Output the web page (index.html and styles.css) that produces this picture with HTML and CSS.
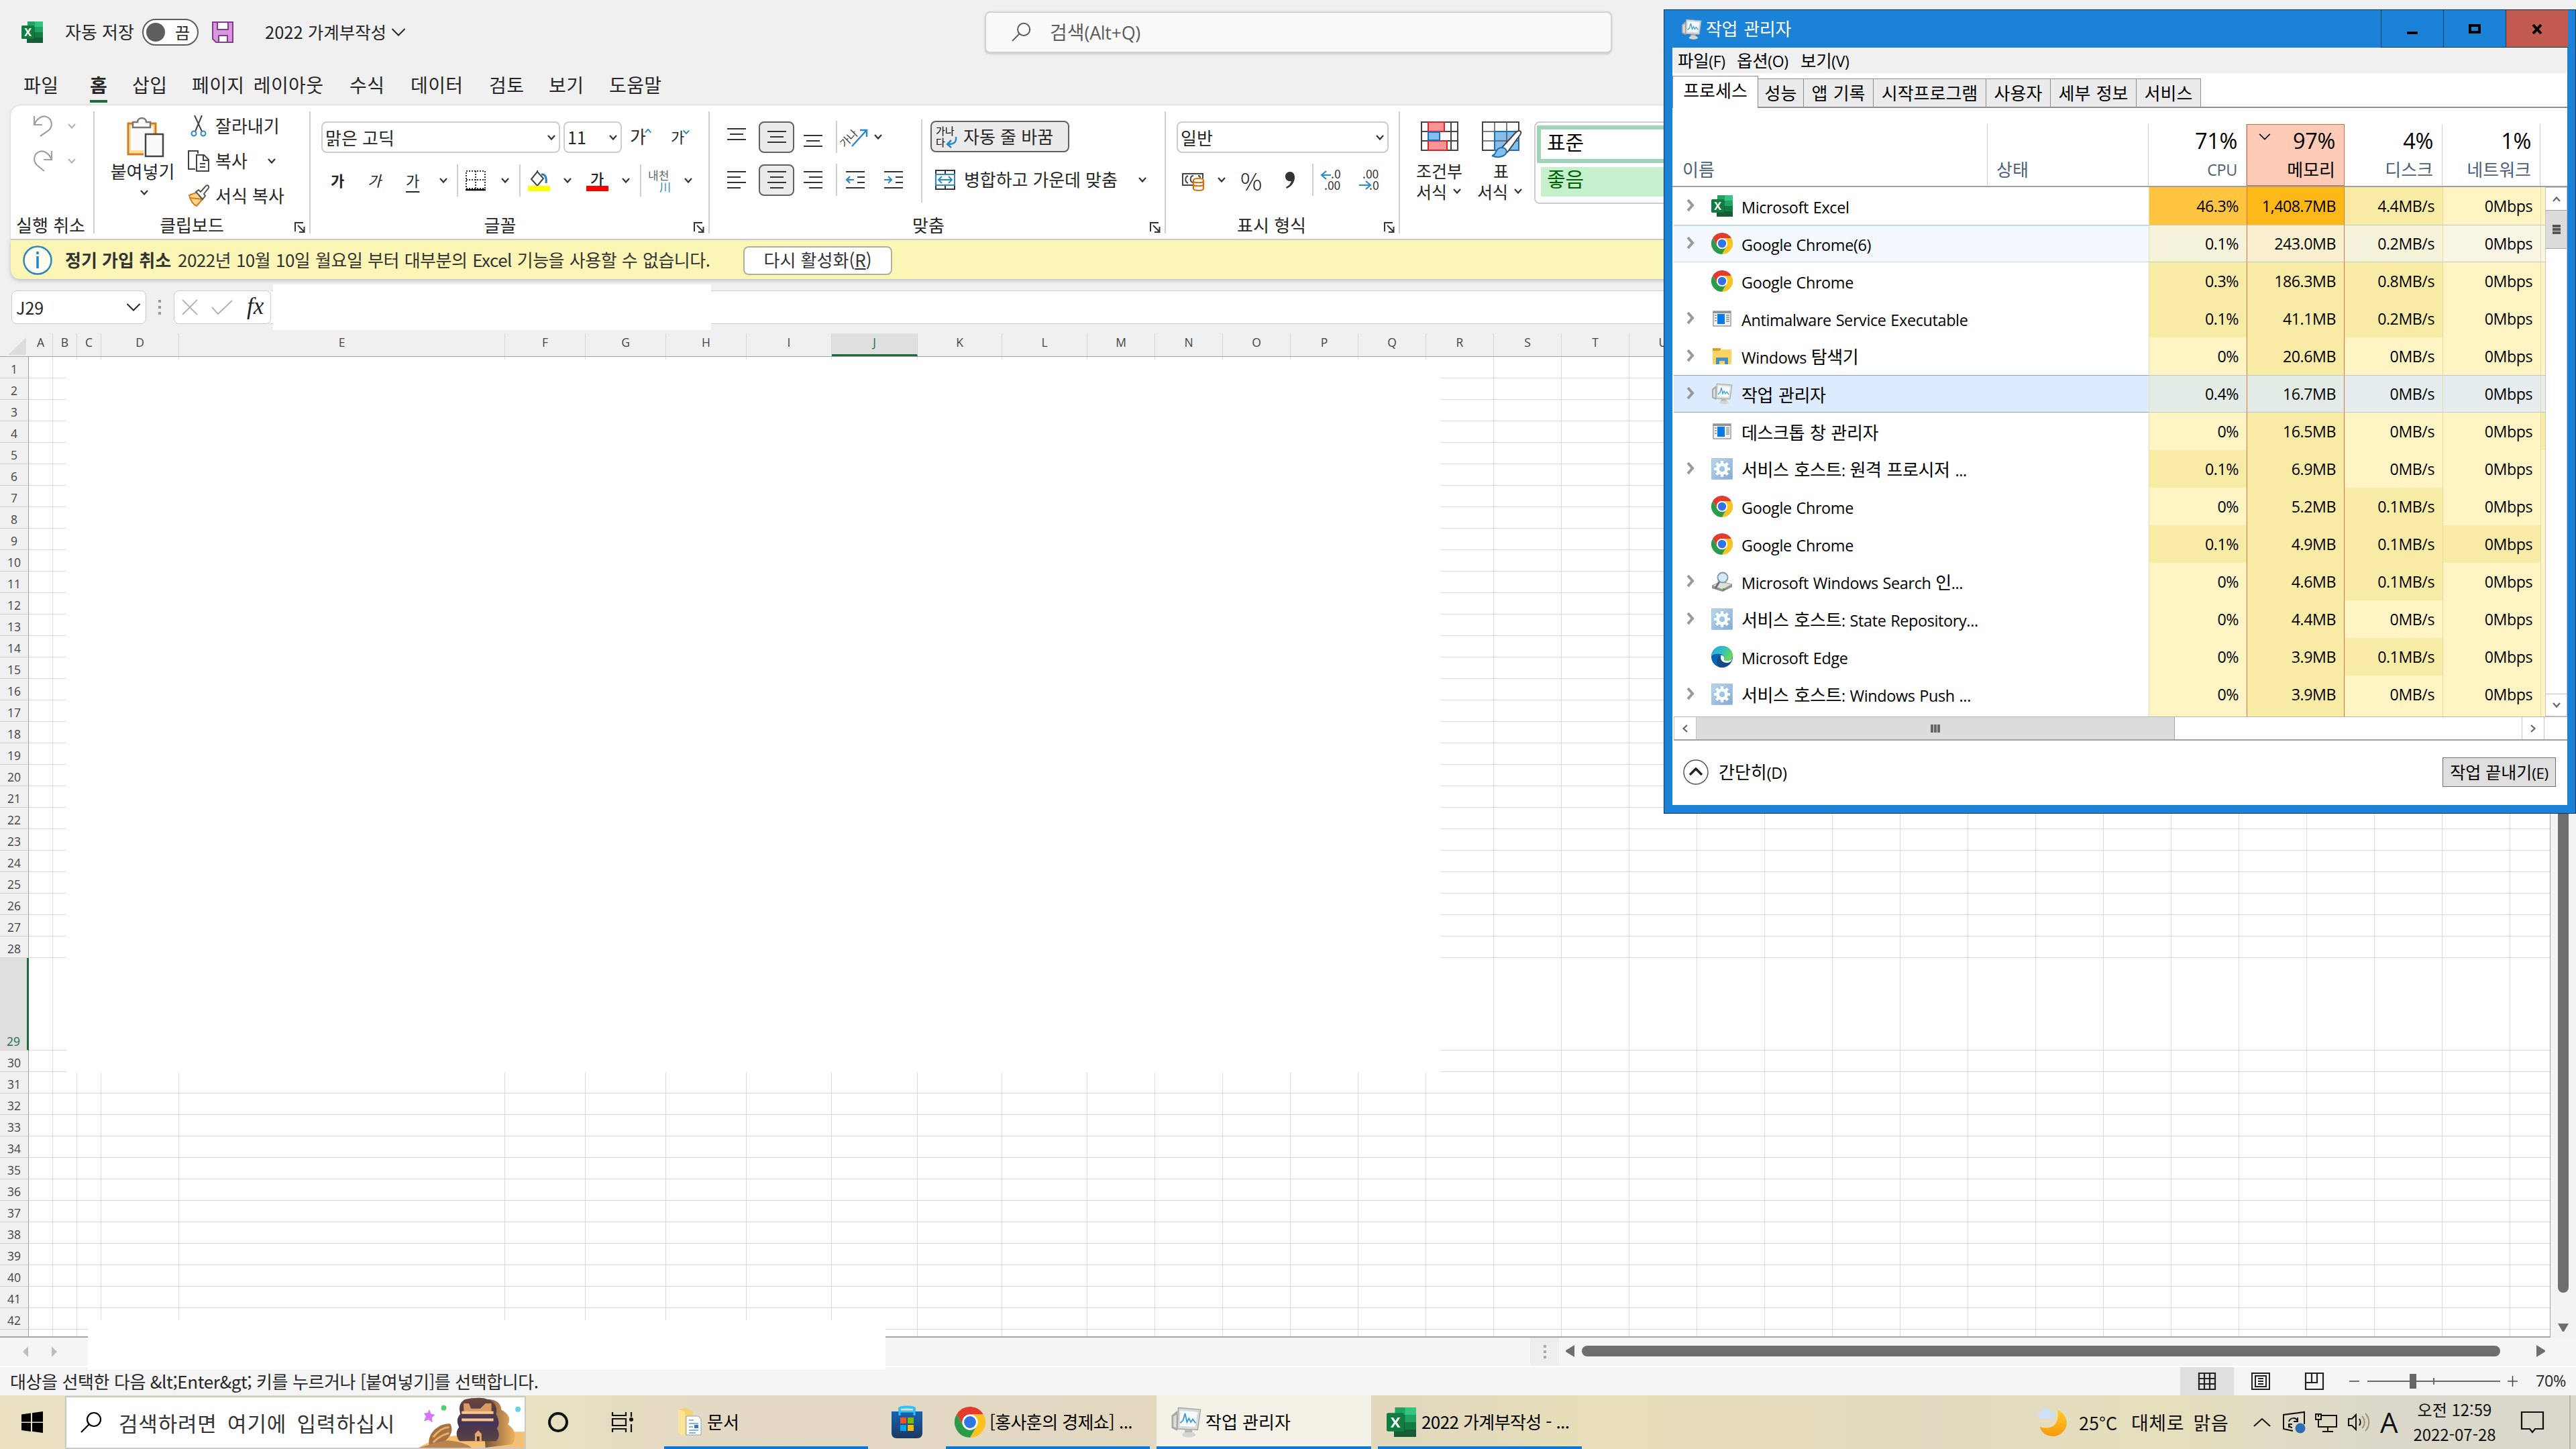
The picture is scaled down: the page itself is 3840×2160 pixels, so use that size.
FILE: index.html
```html
<!DOCTYPE html>
<html lang="ko">
<head>
    <meta charset="UTF-8">
    <title>2022 가계부작성</title>
    <link rel="stylesheet" href="styles.css">
</head>
<body>
    <svg class="defs" width="0" height="0">
        <defs>
            <linearGradient id="edgeA" x1="0" y1="0" x2="1" y2="0.6"><stop offset="0" stop-color="#2aa7e0"/><stop offset="0.5" stop-color="#2fc0c8"/><stop offset="1" stop-color="#6fd94f"/></linearGradient>
            <linearGradient id="gearA" x1="0" y1="0" x2="1" y2="1"><stop offset="0" stop-color="#b4daea"/><stop offset="1" stop-color="#86a9da"/></linearGradient>
            <linearGradient id="moonA" x1="0" y1="0" x2="0" y2="1"><stop offset="0" stop-color="#ffc82e"/><stop offset="1" stop-color="#f79a0c"/></linearGradient>
            <linearGradient id="rockA" x1="0" y1="0" x2="1" y2="0"><stop offset="0" stop-color="#6b4a3a"/><stop offset="1" stop-color="#f0b45e"/></linearGradient>
            <linearGradient id="rockB" x1="0" y1="0" x2="0" y2="1"><stop offset="0" stop-color="#6a4636"/><stop offset="0.6" stop-color="#453356"/><stop offset="1" stop-color="#5c4440"/></linearGradient>
            <linearGradient id="storeA" x1="0" y1="0" x2="0" y2="1"><stop offset="0" stop-color="#1265b4"/><stop offset="1" stop-color="#1c3763"/></linearGradient>
            <symbol id="chev" viewBox="0 0 14 10"><path d="M2 2l5 5.5L12 2" fill="none" stroke="currentColor" stroke-width="2.2"/></symbol>
            <symbol id="chevBig" viewBox="0 0 22 14"><path d="M1.500 2l9.500 9.500L20.500 2" fill="none" stroke="currentColor" stroke-width="2"/></symbol>
            <symbol id="launch" viewBox="0 0 16 16"><path d="M1 14V1h12M5 5l9 9M14.500 7v8H7" fill="none" stroke="#333" stroke-width="2"/></symbol>
            <symbol id="mag" viewBox="0 0 32 32"><circle cx="20" cy="12" r="10" fill="none" stroke="currentColor" stroke-width="2.200"/><path d="M13 19L1 31" stroke="currentColor" stroke-width="2.200"/></symbol>
            <symbol id="excel" viewBox="0 0 32 32">
                <path d="M9 0h23v32H9z" fill="#21a366"/><path d="M20 0h12v8H20z" fill="#33c481"/><path d="M8 8h12v8H8z" fill="#107c41"/><path d="M20 16h12v8H20z" fill="#107c41"/><path d="M8 16h12v8H8zM8 24h24v8H8z" fill="#185c37"/>
                <rect y="6" width="19" height="20" rx="1.500" fill="#107c41"/>
                <text x="9.500" y="22" class="excel-x">X</text>
            </symbol>
            <symbol id="chrome" viewBox="0 0 48 48">
                <path d="M3.200 12A24 24 0 0 1 44.800 12H24A12 12 0 0 0 13.600 30z" fill="#e33b2e"/>
                <path d="M44.800 12A24 24 0 0 1 24 48L34.400 30A12 12 0 0 0 24 12z" fill="#fcc31e"/>
                <path d="M24 48A24 24 0 0 1 3.200 12L13.600 30A12 12 0 0 0 34.400 30z" fill="#2a9b48"/>
                <circle cx="24" cy="24" r="12" fill="#fff"/><circle cx="24" cy="24" r="9.300" fill="#2f75e8"/>
            </symbol>
            <symbol id="exe" viewBox="0 0 32 32"><path d="M3 5h26v22H3z" fill="#f1f2f3" stroke="#999ea5" stroke-width="1.500"/><path d="M3 5h26v3H3z" fill="#8c939b"/><path d="M9 9h11v15H9z" fill="#0a7be0"/><path d="M5 11h3M5 15h3M5 19h3M22 11h5M22 14h5M22 17h5M22 20h5" stroke="#888" stroke-width="1.500"/></symbol>
            <symbol id="folder" viewBox="0 0 32 32"><path d="M2 4h12v5H2z" fill="#d9a023"/><path d="M2 8h10l3-2h15v22H2z" fill="#fbd35f"/><path d="M7 28V18h18v10h-5v-5h-8v5z" fill="#3d93cd"/></symbol>
            <symbol id="tm" viewBox="0 0 32 32"><path d="M1 9l6-5v21l-6-3z" fill="#a9aaa8"/><path d="M3 10l3-2v14l-3-1z" fill="#dcdcd8"/><path d="M8 1l23 2-3 21-21-1z" fill="#d9dbd9" stroke="#a3a5a3"/><path d="M10 4l18 1.500-2.500 15.500L9.500 20z" fill="#f4fafd"/><path d="M10 17l3-3 2-7 2 9 2-4 2 4 2-3 3 4" fill="none" stroke="#3b9bd6" stroke-width="1.300"/><path d="M15 24h7l1 4H14z" fill="#b5b7b5"/><ellipse cx="19" cy="29" rx="7" ry="2.800" fill="#d4d5d3"/></symbol>
            <symbol id="gear" viewBox="0 0 32 32"><path d="M.5.5h31v31H.5z" fill="url(#gearA)" stroke="#a9c3d6"/><circle cx="16" cy="16" r="6.500" fill="none" stroke="#fbfdff" stroke-width="4.500"/><path d="M16 4v5M16 23v5M4 16h5M23 16h5M7.500 7.500l3.500 3.500M21 21l3.500 3.500M7.500 24.500L11 21M21 11l3.500-3.500" stroke="#fbfdff" stroke-width="4"/></symbol>
            <symbol id="finder" viewBox="0 0 32 32"><path d="M1 22l14-6 16 4-14 8z" fill="#dededb" stroke="#92938f"/><path d="M1 22l16 6v3L1 26zM17 28l14-8v4l-14 7z" fill="#8f908c"/><circle cx="17" cy="10" r="7.500" fill="#d5e9f6" stroke="#8a99a6" stroke-width="2"/><path d="M12 16l-6 10" stroke="#6e7377" stroke-width="3"/><path d="M17 26h3v3h-3z" fill="#3fae2a"/></symbol>
            <symbol id="edge" viewBox="0 0 32 32"><circle cx="16" cy="16" r="16" fill="#0c62b4"/><path d="M0 15C1 5 8 0 16 0c10 0 16 7 16 14 0 5-4 8-9 8-3 0-5-1-4-3 1-2 0-6-5-7C8 11 2 12 0 15z" fill="url(#edgeA)"/><path d="M11 31C7 27 7 17 14 14c-1 7 3 11 9 11 3 0 5-.500 7-1.500C27 29 22 32 16 32c-2 0-4-.300-5-1z" fill="#154a86"/><path d="M14 14c3-1 6 2 5 5-1 2 1 3 4 3 4 0 6-1 8-3-1 4-4 6-8 6-6 0-10-4-9-11z" fill="#fff"/></symbol>
            <symbol id="alignC" viewBox="0 0 28 28"><path d="M0 2h28M4 10h20M0 18h28M4 26h20" stroke="#333" stroke-width="2.200"/></symbol>
        </defs>
    </svg>

    <div class="excel">
        <header class="title-bar">
            <svg class="app-icon"><use href="#excel"/></svg>
            <span class="autosave">자동 저장</span>
            <span class="toggle"><i></i><b>끔</b></span>
            <svg class="save" viewBox="0 0 32 32"><path d="M1 1h30v30H6l-5-5z" fill="#d697dc" stroke="#853b91" stroke-width="2"/><path d="M8 1h16v11H8zM10 21h13v10H10z" fill="#fff" stroke="#853b91" stroke-width="2"/></svg>
            <span class="doc-name">2022 가계부작성</span>
            <svg class="doc-chev"><use href="#chevBig"/></svg>
            <div class="search"><svg><use href="#mag"/></svg><span>검색<span class="en">(Alt+Q)</span></span></div>
        </header>

        <nav class="tabs">
            <span>파일</span><span class="active">홈</span><span>삽입</span><span>페이지 레이아웃</span><span>수식</span><span>데이터</span><span>검토</span><span>보기</span><span>도움말</span>
        </nav>

        <section class="ribbon">
            <div class="group g-undo">
                <div class="body">
                    <div class="undo-row"><svg viewBox="0 0 30 32"><path d="M2 1v13h12M2 14C6 4 14 0 20 2c9 3 10 14 4 20l-13 9" fill="none" stroke="#a0a0a0" stroke-width="2.200"/></svg><svg class="chev"><use href="#chev"/></svg></div>
                    <div class="undo-row"><svg viewBox="0 0 30 32"><path d="M28 1v13H16M28 14C24 4 16 0 10 2c-9 3-10 14-4 20l11 9" fill="none" stroke="#a0a0a0" stroke-width="2.200"/></svg><svg class="chev"><use href="#chev"/></svg></div>
                </div>
                <div class="label">실행 취소</div>
            </div>
            <div class="group g-clip">
                <div class="body">
                    <div class="paste">
                        <svg viewBox="0 0 56 60"><path d="M2 9h41v46H2z" fill="#fbdc9a" stroke="#d87b1a" stroke-width="3"/><path d="M6 13h33v36H6z" fill="#fafafa"/><path d="M9 7h7c0-8 13-8 13 0h6v8H9z" fill="#fafafa" stroke="#777" stroke-width="2.500"/><path d="M25 24h31v36H25z" fill="#fff"/><path d="M28 25h26v33H28z" fill="#fafafa" stroke="#444" stroke-width="2.500"/></svg>
                        <span>붙여넣기</span>
                        <svg class="chev"><use href="#chev"/></svg>
                    </div>
                    <div class="clip-list">
                        <div><svg viewBox="0 0 32 32"><path d="M10 0l11 24M21 0L11 24" stroke="#444" stroke-width="2" fill="none"/><circle cx="9" cy="27" r="3.500" fill="none" stroke="#2b88c9" stroke-width="2"/><circle cx="23" cy="27" r="3.500" fill="none" stroke="#2b88c9" stroke-width="2"/></svg><span>잘라내기</span></div>
                        <div><svg viewBox="0 0 32 32"><path d="M11 28H1V1h14v4M13 7h11l7 7v17H13zM23 7v8h8M18 20h8M18 25h8" fill="none" stroke="#444" stroke-width="2"/></svg><span>복사</span><svg class="chev"><use href="#chev"/></svg></div>
                        <div><svg viewBox="0 0 32 32"><path d="M2 15l11-4 9 10-9 10C8 29 4 23 2 15z" fill="#fbd48a" stroke="#d87b1a" stroke-width="2"/><path d="M4 19l17 2" stroke="#d87b1a" stroke-width="2"/><path d="M12 10l4-3 3 3 8-9c3-2 5 1 4 3l-7 9 2 3-4 5z" fill="#fff" stroke="#555" stroke-width="2"/></svg><span>서식 복사</span></div>
                    </div>
                </div>
                <div class="label">클립보드<svg><use href="#launch"/></svg></div>
            </div>
            <div class="group g-font">
                <div class="body">
                    <div class="font-top">
                        <div class="combo">맑은 고딕<svg class="chev"><use href="#chev"/></svg></div>
                        <div class="combo size">11<svg class="chev"><use href="#chev"/></svg></div>
                        <span class="grow">가<svg class="chev"><use href="#chev"/></svg></span>
                        <span class="shrink">가<svg class="chev"><use href="#chev"/></svg></span>
                    </div>
                    <div class="font-bottom">
                        <b>가</b><em>가</em><u>가</u><svg class="chev"><use href="#chev"/></svg><i class="sep"></i>
                        <svg class="ic30" viewBox="0 0 30 30"><path d="M1 1h28v26H1zM15 1v26M1 14h28" fill="none" stroke="#333" stroke-width="2" stroke-dasharray="2 2"/><path d="M0 29h30" stroke="#000" stroke-width="2.500"/></svg>
                        <svg class="chev"><use href="#chev"/></svg><i class="sep"></i>
                        <svg class="ic33" viewBox="0 0 33 33"><path d="M14 3L5 14l9 10 9-11zM14 3v-2" fill="#fff" stroke="#444" stroke-width="2"/><path d="M20 7c6-1 8 5 7 13" fill="none" stroke="#2b7fc0" stroke-width="3"/><path d="M0 24h33v8H0z" fill="#ff0"/></svg>
                        <svg class="chev"><use href="#chev"/></svg>
                        <span class="color">가</span>
                        <svg class="chev"><use href="#chev"/></svg><i class="sep"></i>
                        <span class="phonetic">내천<i>川</i></span>
                        <svg class="chev"><use href="#chev"/></svg>
                    </div>
                </div>
                <div class="label">글꼴<svg><use href="#launch"/></svg></div>
            </div>
            <div class="group g-align">
                <div class="body">
                    <div class="align-left">
                        <div class="arow">
                            <svg viewBox="0 0 28 28"><path d="M0 2h28M4 10h20M0 18h28" stroke="#333" stroke-width="2.200"/></svg>
                            <span class="pressed"><svg viewBox="0 0 28 28"><path d="M0 6h28M4 14h20M0 22h28" stroke="#333" stroke-width="2.200"/></svg></span>
                            <svg viewBox="0 0 28 28"><path d="M0 12h28M4 20h20M0 28h28" stroke="#333" stroke-width="2.200"/></svg>
                            <i class="sep"></i>
                            <svg class="orient" viewBox="0 0 36 36"><text x="-9" y="25" transform="rotate(-45 8 18)">가나</text><path d="M12 32L33 9M24 8h10v10" fill="none" stroke="#2b88c9" stroke-width="2.500"/></svg>
                            <svg class="chev"><use href="#chev"/></svg>
                        </div>
                        <div class="arow second">
                            <svg viewBox="0 0 28 28"><path d="M0 2h28M0 10h20M0 18h28M0 26h20" stroke="#333" stroke-width="2.200"/></svg>
                            <span class="pressed"><svg><use href="#alignC"/></svg></span>
                            <svg viewBox="0 0 28 28"><path d="M0 2h28M8 10h20M0 18h28M8 26h20" stroke="#333" stroke-width="2.200"/></svg>
                            <i class="sep"></i>
                            <svg viewBox="0 0 28 28"><path d="M0 2h28M17 10h11M17 18h11M0 26h28" stroke="#333" stroke-width="2.200"/><path d="M12 14H1M6 9l-5 5 5 5" fill="none" stroke="#2b88c9" stroke-width="2.200"/></svg>
                            <svg viewBox="0 0 28 28"><path d="M0 2h28M17 10h11M17 18h11M0 26h28" stroke="#333" stroke-width="2.200"/><path d="M0 14h11M6 9l5 5-5 5" fill="none" stroke="#2b88c9" stroke-width="2.200"/></svg>
                        </div>
                    </div>
                    <div class="align-right">
                        <div class="wrap"><svg viewBox="0 0 34 34"><text x="0" y="14">가나</text><text x="0" y="31">다</text><path d="M30 17c1 8-3 11-12 11M23 22l-6 6 6 5" fill="none" stroke="#2b88c9" stroke-width="2.500"/></svg><span>자동 줄 바꿈</span></div>
                        <div class="merge"><svg viewBox="0 0 30 30"><path d="M1 1h28v28H1zM15 1v6M15 23v6" fill="none" stroke="#333" stroke-width="2"/><path d="M1 7h28v16H1z" fill="#fff" stroke="#2b88c9" stroke-width="2"/><path d="M5 15h20M10 10l-5 5 5 5M20 10l5 5-5 5" fill="none" stroke="#2b88c9" stroke-width="2"/></svg><span>병합하고 가운데 맞춤</span><svg class="chev"><use href="#chev"/></svg></div>
                    </div>
                </div>
                <div class="label">맞춤<svg><use href="#launch"/></svg></div>
            </div>
            <div class="group g-num">
                <div class="body">
                    <div class="combo">일반<svg class="chev"><use href="#chev"/></svg></div>
                    <div class="num-row">
                        <svg class="ic33" viewBox="0 0 33 33"><path d="M16 24H1V7h30v7" fill="none" stroke="#444" stroke-width="2"/><path d="M9 10c-5 2-5 9 0 11M16 20c-5-2-4-10 1-10M24 10c2 0 3 1 3 3" fill="none" stroke="#444" stroke-width="2"/><path d="M17 17c0-4 15-4 15 0v12c0 4-15 4-15 0zM17 18c0 3 15 3 15 0M17 23c0 3 15 3 15 0" fill="#fff" stroke="#d8700f" stroke-width="2.200"/></svg>
                        <svg class="chev"><use href="#chev"/></svg>
                        <span class="pct">%</span>
                        <svg class="comma" viewBox="0 0 16 28"><path d="M8 2c4 0 7 3 7 8 0 8-5 14-12 17l-1-2c4-2 7-5 8-9C5 17 1 14 1 9c0-4 3-7 7-7z" fill="#333"/></svg>
                        <i class="sep"></i>
                        <svg class="dec" viewBox="0 0 32 34"><path d="M15 10H1M8 4l-7 6 7 6" fill="none" stroke="#2b88c9" stroke-width="2.200"/><text x="15" y="15">.0</text><text x="5" y="32">.00</text></svg>
                        <svg class="dec" viewBox="0 0 32 34"><text x="5" y="15">.00</text><text x="15" y="32">.0</text><path d="M0 25h16M10 19l7 6-7 6" fill="none" stroke="#2b88c9" stroke-width="2.200"/></svg>
                    </div>
                </div>
                <div class="label">표시 형식<svg><use href="#launch"/></svg></div>
            </div>
            <div class="group g-style">
                <div class="body">
                    <div class="big cond">
                        <svg viewBox="0 0 60 54"><path d="M1 1h54v42H1zM1 15h54M1 29h54M11 1v42M45 1v42" fill="#fafafa" stroke="#444" stroke-width="2"/><path d="M11 1h24v14H11zM11 29h28v14H11z" fill="#ff9296" stroke="#cf2a2a" stroke-width="2"/><path d="M11 16h17v12H11z" fill="#83beec" stroke="#1f6fb5" stroke-width="2"/></svg>
                        <span>조건부</span><span>서식<svg class="chev"><use href="#chev"/></svg></span>
                    </div>
                    <div class="big tbl">
                        <svg viewBox="0 0 60 54"><path d="M1 1h54v42H1z" fill="#fafafa" stroke="#444" stroke-width="2"/><path d="M19 15h36v28H19z" fill="#83beec"/><path d="M19 1v42M37 1v42M1 15h54M1 29h54" stroke="#555" stroke-width="1.500"/><path d="M19 15h36v28H19z" fill="none" stroke="#1f6fb5" stroke-width="2"/><path d="M29 40L50 17c5-5 11-3 7 3L38 46z" fill="#fff" stroke="#444" stroke-width="2"/><path d="M15 51c7 0 4-11 14-12 8 0 10 7 5 11-5 4-13 4-19 1z" fill="#83beec" stroke="#1f6fb5" stroke-width="2"/></svg>
                        <span>표</span><span>서식<svg class="chev"><use href="#chev"/></svg></span>
                    </div>
                    <div class="gallery"><div class="normal">표준</div><div class="good">좋음</div></div>
                </div>
            </div>
        </section>

        <section class="notice">
            <svg viewBox="0 0 44 44"><circle cx="22" cy="22" r="20.500" fill="#fdfdf3" stroke="#2f86ba" stroke-width="2.500"/><path d="M22 9v4M22 16v18" stroke="#1f86cc" stroke-width="3.500"/></svg>
            <b>정기 가입 취소</b>
            <span class="msg">2022년 10월 10일 월요일 부터 대부분의 Excel 기능을 사용할 수 없습니다.</span>
            <button>다시 활성화(<u>R</u>)</button>
        </section>

        <section class="formula-bar">
            <div class="name-box">J29<svg><use href="#chevBig"/></svg></div>
            <svg class="dots" viewBox="0 0 4 22"><path d="M2 0v4M2 9v4M2 18v4" stroke="#999" stroke-width="4"/></svg>
            <div class="fx">
                <svg viewBox="0 0 24 24"><path d="M1 1l22 22M23 1L1 23" stroke="#b5b5b5" stroke-width="2"/></svg>
                <svg class="check" viewBox="0 0 32 22"><path d="M1 11l9 10L31 1" fill="none" stroke="#b5b5b5" stroke-width="2"/></svg>
                <span>fx</span>
            </div>
            <div class="formula"></div>
            <div class="blank blank-formula"></div>
        </section>

        <section class="sheet-area">
            <div class="sheet">
                <div class="col-heads" id="colHeads"></div>
                <div id="rows"></div>
                <div class="blank blank-cells"></div>
            </div>
            <div class="vscroll"><div class="thumb"></div><svg viewBox="0 0 18 14"><path d="M1 1h16l-7 12H8z" fill="#6e6e6e"/></svg></div>
        </section>

        <section class="sheet-tabs">
            <svg class="nav1" viewBox="0 0 52 16"><path d="M8 0v16L0 8zM43 0v16l8-8z" fill="#bdbdbd"/></svg>
            <div class="splitter"><svg viewBox="0 0 4 22"><path d="M2 1v4M2 9v4M2 17v4" stroke="#aaa" stroke-width="4"/></svg></div>
            <div class="hscroll"><svg viewBox="0 0 14 18"><path d="M13 0v18L0 10V8z" fill="#6e6e6e"/></svg><div class="thumb"></div><svg viewBox="0 0 14 18"><path d="M1 0v18l13-8V8z" fill="#6e6e6e"/></svg></div>
            <div class="blank blank-tabs"></div>
        </section>

        <footer class="status">
            <span class="status-text">대상을 선택한 다음 &amp;lt;Enter&amp;gt; 키를 누르거나 [붙여넣기]를 선택합니다.</span>
            <span class="view on"><svg viewBox="0 0 28 28"><path d="M2 2h24v24H2zM10 2v24M18 2v24M2 10h24M2 18h24" fill="none" stroke="#222" stroke-width="2.200"/></svg></span>
            <span class="view"><svg viewBox="0 0 28 28"><path d="M1 2h26v24H1zM6 6h16v16H6zM10 10h8M10 14h8M10 18h8" fill="none" stroke="#222" stroke-width="2"/></svg></span>
            <span class="view"><svg viewBox="0 0 28 28"><path d="M1 2h26v24H1zM1 16h17V2M10 2v14" fill="none" stroke="#222" stroke-width="2.200"/></svg></span>
            <svg class="zoom-bar" viewBox="0 0 252 26"><path d="M0 13h15M236 13h15M243.500 5v16" stroke="#444" stroke-width="1.500"/><path d="M27 13h198" stroke="#6a6a6a" stroke-width="2"/><path d="M126 8v10" stroke="#6a6a6a" stroke-width="2"/><path d="M90 2h10v22H90z" fill="#666"/></svg>
            <span class="zoom en">70%</span>
        </footer>
    </div>

    <footer class="taskbar">
        <svg class="start" viewBox="0 0 32 32"><path d="M0 4.500l14-2V15.500H0zM16 2.200L32 0v15.500H16zM0 17h14v13l-14-2zM16 17h16v15l-16-2.200z" fill="#000"/></svg>
        <div class="tb-search">
            <svg class="tb-mag"><use href="#mag"/></svg><span>검색하려면 여기에 입력하십시</span>
            <svg class="desert" viewBox="0 0 160 76">
                <path d="M0 76C20 64 50 54 90 58l40-6h30v24z" fill="#f3c076"/>
                <path d="M95 4c20-4 30 4 30 15 12 6 14 14 10 22 12 8 14 20 6 30l-40 5z" fill="url(#rockA)"/>
                <path d="M70 3c28-6 52 0 47 22 4 8 6 16 1 22 5 8 4 14-1 19H62c-6-6-6-15-1-21-4-9-3-14 2-20-3-10-1-17 7-22z" fill="url(#rockB)"/>
                <path d="M68 9h8l3 8h14l8-8h9v14H68z" fill="#d79a63"/><path d="M65 21h48v4H65zM65 32h48v4H65z" fill="#f5c792"/>
                <path d="M85 66V55l5-5 5 5v11z" fill="#e0a86e"/><path d="M88 66v-7h4v7z" fill="#4a3030"/>
                <path d="M16 72C12 54 32 38 48 40c6 12-2 24-16 30z" fill="#a9713d"/><path d="M22 60c8-10 16-15 24-15M22 68c8-8 16-12 24-14" fill="none" stroke="#e3ad6c" stroke-width="3"/>
                <path d="M0 76c16-4 30-10 44-11 20 2 30 6 36 11z" fill="#b98350"/>
                <path d="M16 18l3 7 6 1-5 5 1 7-6-4-7 2 3-7-3-5 6-1z" fill="#d975f0"/><circle cx="38" cy="16" r="4" fill="#4fcf75"/><circle cx="150" cy="18" r="4" fill="#63d3e3"/>
            </svg>
        </div>
        <svg class="cortana" viewBox="0 0 32 32"><circle cx="16" cy="16" r="13" fill="none" stroke="#111" stroke-width="4"/></svg>
        <svg class="taskview" viewBox="0 0 34 32"><path d="M2 1v5h20V1M2 31v-5h20v5M2 11h20v10H2zM30 1v7M30 19v12" fill="none" stroke="#111" stroke-width="2.200"/><circle cx="30" cy="12" r="3" fill="#111"/></svg>
        <div class="task docs"><svg viewBox="0 0 36 44"><path d="M1 2l14-1 8 5v32l-14 4-8-4z" fill="#f7d271"/><path d="M1 2l10 5v36L1 38z" fill="#fde49b"/><path d="M13 13h18l4 4v24H13z" fill="#fff" stroke="#8aa5bd"/><path d="M17 19h7M17 24h14M17 29h6M17 34h14M17 38h10" stroke="#55a0d8" stroke-width="1.500"/><path d="M25 26h6v5h-6z" fill="#327cba"/></svg><span>문서</span></div>
        <svg class="store" viewBox="0 0 46 48"><path d="M12 14V3c0-2 22-2 22 0v11" fill="none" stroke="#35c1f1" stroke-width="4"/><path d="M0 8h46v32c0 5-3 8-8 8H8c-5 0-8-3-8-8z" fill="url(#storeA)"/><path d="M12 14V8h22v6" fill="none" stroke="#35c1f1" stroke-width="3"/><path d="M13 17h9v9h-9z" fill="#f25022"/><path d="M24 17h9v9h-9z" fill="#7fba00"/><path d="M13 28h9v9h-9z" fill="#00a4ef"/><path d="M24 28h9v9h-9z" fill="#ffb900"/></svg>
        <div class="task chrome"><svg><use href="#chrome"/></svg><span>[홍사훈의 경제쇼] ...</span></div>
        <div class="task tm active"><svg><use href="#tm"/></svg><span>작업 관리자</span></div>
        <div class="task xl"><svg><use href="#excel"/></svg><span>2022 가계부작성 - ...</span></div>
        <svg class="weather" viewBox="0 0 46 44"><path d="M31 4c18 6 20 34-4 39-12 1-20-5-22-14 19 6 30-6 26-25z" fill="url(#moonA)"/><path d="M6 16C-2 16-1 7 6 8 7-1 20-2 21 7c8 0 8 10 0 10z" fill="#cfdff4"/></svg>
        <span class="temp">25°C</span><span class="cond-text">대체로 맑음</span>
        <svg class="up" viewBox="0 0 26 14"><path d="M1 13L13 2l12 11" fill="none" stroke="#111" stroke-width="2"/></svg>
        <svg class="tray sync" viewBox="0 0 34 32"><path d="M15 29L1 26V5l31-4v18" fill="none" stroke="#111" stroke-width="2"/><path d="M9 15c2-6 11-7 13 0M22 9v6h-6M9 24v-5h5M9 20c1 3 3 4 5 4" fill="none" stroke="#111" stroke-width="2"/><circle cx="26" cy="25" r="7.500" fill="#2e6db4"/></svg>
        <svg class="tray net" viewBox="0 0 34 32"><path d="M9 6h23v17H5V13M1 4h8v8H1zM5 4v4M19 23v7M11 30h16" fill="none" stroke="#111" stroke-width="2"/></svg>
        <svg class="tray vol" viewBox="0 0 34 32"><path d="M1 11h5l6-6v22l-6-6H1z" fill="none" stroke="#111" stroke-width="2"/><path d="M17 11c2 3 2 7 0 10" fill="none" stroke="#111" stroke-width="2"/><path d="M21 7c5 5 5 13 0 18M26 3c7 7 7 19 0 26" fill="none" stroke="#9b947d" stroke-width="2"/></svg>
        <span class="ime en">A</span>
        <div class="clock"><span>오전 12:59</span><span>2022-07-28</span></div>
        <svg class="note" viewBox="0 0 34 34"><path d="M1 2h32v25H21l-4 5-4-5H1z" fill="none" stroke="#111" stroke-width="2.200"/></svg>
        <i class="peek"></i>
    </footer>

    <div class="taskmgr">
        <div class="tm-title">
            <svg class="tm-icon"><use href="#tm"/></svg><span>작업 관리자</span>
            <div class="btn"><svg viewBox="0 0 20 20"><path d="M2 14h16v4H2z" fill="#000"/></svg></div>
            <div class="btn"><svg viewBox="0 0 20 20"><path d="M3 5h14v10H3z" fill="none" stroke="#000" stroke-width="4"/></svg></div>
            <div class="btn close"><svg viewBox="0 0 20 20"><path d="M4 4l12 13M16 4L4 17" stroke="#000" stroke-width="4"/></svg></div>
        </div>
        <div class="tm-client">
            <div class="tm-menu"><span>파일<span class="en">(F)</span></span><span>옵션<span class="en">(O)</span></span><span>보기<span class="en">(V)</span></span></div>
            <div class="tm-tabs"><span class="on">프로세스</span><span>성능</span><span>앱 기록</span><span>시작프로그램</span><span>사용자</span><span>세부 정보</span><span>서비스</span></div>
            <div class="tm-head">
                <div class="h-name">이름</div><div class="h-state">상태</div>
                <div class="h-num"><b class="en">71%</b><span class="en">CPU</span></div>
                <div class="h-num mem"><svg><use href="#chevBig"/></svg><b class="en">97%</b><span>메모리</span></div>
                <div class="h-num"><b class="en">4%</b><span>디스크</span></div>
                <div class="h-num"><b class="en">1%</b><span>네트워크</span></div>
                <div class="h-end"></div>
            </div>
            <div class="tm-main">
                <div class="procs" id="procs"></div>
                <div class="tm-vscroll">
                    <div class="arrow up"><svg class="chev"><use href="#chev"/></svg></div>
                    <div class="thumb"><i></i><i></i><i></i></div>
                    <div class="arrow down"><svg class="chev"><use href="#chev"/></svg></div>
                </div>
            </div>
            <div class="tm-hscroll">
                <div class="arrow left"><svg class="chev"><use href="#chev"/></svg></div>
                <div class="thumb"><i></i><i></i><i></i></div>
                <div class="arrow right"><svg class="chev"><use href="#chev"/></svg></div>
            </div>
            <div class="tm-foot">
                <svg viewBox="0 0 38 38"><circle cx="19" cy="19" r="18" fill="#fff" stroke="#555" stroke-width="1.500"/><path d="M10 23l9-9 9 9" fill="none" stroke="#222" stroke-width="3.500"/></svg>
                <span>간단히<span class="en">(D)</span></span>
                <button>작업 끝내기<span class="en">(E)</span></button>
            </div>
        </div>
    </div>

    <script src="script.js"></script>
</body>
</html>
```
FILE: styles.css
```css
* {
    box-sizing: border-box;
}
body {
    margin: 0;
    width: 3840px;
    height: 2160px;
    overflow: hidden;
    position: relative;
    font-family: "Noto Sans CJK KR", sans-serif;
    font-size: 26px;
    line-height: 1;
    color: #262626;
    white-space: nowrap;
    background: #f0f0f0;
}
svg {
    display: block;
    flex: none;
    overflow: visible;
}
.defs {
    position: absolute;
}
button {
    font: inherit;
    padding: 0;
}
.en {
    font-family: "Open Sans", "Noto Sans CJK KR", sans-serif;
    font-size: .9em;
    letter-spacing: -.35px;
}
.chev {
    width: 14px;
    height: 10px;
    color: #333;
}
.excel-x {
    font: bold 16px "Open Sans", sans-serif;
    fill: #fff;
    text-anchor: middle;
}
.blank {
    position: absolute;
    background: #fff;
}

/* excel window */
.excel {
    height: 2080px;
    display: flex;
    flex-direction: column;
    background: #f0f0f0;
}
.title-bar {
    height: 96px;
    display: flex;
    align-items: center;
    padding-left: 32px;
}
.app-icon {
    width: 32px;
    height: 32px;
}
.autosave {
    width: 115px;
    margin-left: 33px;
    padding-bottom: 2px;
}
.toggle {
    width: 84px;
    height: 40px;
    border: 2px solid #5c5c5c;
    border-radius: 20px;
    background: #fff;
    display: flex;
    align-items: center;
    padding-left: 4px;
}
.toggle i {
    width: 28px;
    height: 28px;
    border-radius: 50%;
    background: #5f5f5f;
}
.toggle b {
    font-weight: normal;
    font-size: 24px;
    margin-left: 15px;
}
.save {
    width: 32px;
    height: 32px;
    margin-left: 20px;
}
.doc-name {
    width: 188px;
    margin-left: 47px;
    padding-bottom: 2px;
    font-size: 25.500px;
}
.doc-chev {
    width: 22px;
    height: 14px;
}
.search {
    width: 935px;
    height: 63px;
    margin-left: 863px;
    border: 2px solid #d2d2d2;
    border-bottom-width: 3px;
    border-radius: 8px;
    background: #fafafa;
    display: flex;
    align-items: center;
    color: #5c5c5c;
    box-shadow: 0 1px 3px #ccc;
    font-size: 28px;
}
.search .en {
    font-size: 27px;
}
.search svg {
    width: 29px;
    height: 29px;
    margin: 0 28px 0 38px;
}
.tabs {
    height: 60px;
    display: grid;
    grid-template-columns: 99px 63px 89px 235px 91px 117px 89px 90px 120px;
    padding: 15px 0 0 35px;
    font-size: 28px;
    line-height: 30px;
    letter-spacing: .4px;
    word-spacing: 5px;
}
.tabs .active {
    font-weight: bold;
    width: 26px;
    height: 42px;
    border-bottom: 4px solid #176f3d;
}

.ribbon {
    height: 202px;
    margin-left: 16px;
    border-top: 1px solid #ddd;
    border-bottom: 2px solid #cfcfcf;
    border-radius: 16px 0 0 0;
    background: #fff;
    display: grid;
    grid-template-columns: 125px 322px 595px 680px 349px 1fr;
    box-shadow: -1px 0 2px #ddd;
}
.group {
    height: 182px;
    margin-top: 9px;
    border-right: 2px solid #d0d0d0;
    display: flex;
    flex-direction: column;
}
.group .body {
    height: 158px;
    flex: none;
}
.label {
    height: 24px;
    line-height: 22px;
    display: flex;
    justify-content: center;
    position: relative;
}
.label svg {
    position: absolute;
    right: 6px;
    top: 7px;
    width: 16px;
    height: 16px;
}
.sep {
    width: 2px;
    height: 48px;
    background: #d0d0d0;
}
.g-undo .label {
    padding-right: 4px;
}
.g-clip .label {
    padding-right: 30px;
}
.g-font .label {
    padding-right: 28px;
}
.g-align .label {
    padding-right: 26px;
}
.undo-row {
    display: flex;
    align-items: center;
    height: 52px;
    padding-left: 33px;
}
.undo-row:first-child {
    margin-top: -4px;
}
.undo-row svg {
    width: 30px;
    height: 32px;
}
.undo-row .chev {
    width: 14px;
    height: 10px;
    margin-left: 21px;
    color: #b5b5b5;
}
.g-clip .body {
    display: flex;
    padding-left: 24px;
}
.paste {
    width: 95px;
    display: flex;
    flex-direction: column;
    align-items: center;
    padding-top: 9px;
}
.paste svg {
    width: 56px;
    height: 60px;
    margin-left: 8px;
}
.paste span {
    margin: 7px 0 14px;
}
.paste .chev {
    width: 14px;
    height: 10px;
    margin-left: 4px;
}
.clip-list {
    margin: -4px 0 0 20px;
}
.clip-list div {
    height: 52px;
    display: grid;
    grid-template-columns: 41px 77px 14px;
    align-items: center;
}
.clip-list span {
    padding-bottom: 2px;
}
.clip-list svg {
    width: 32px;
    height: 32px;
}
.clip-list .chev {
    width: 14px;
    height: 10px;
}
.combo {
    width: 356px;
    height: 47px;
    border: 2px solid #cdcdcd;
    border-radius: 8px;
    background: #fff;
    display: flex;
    align-items: center;
    justify-content: space-between;
    padding: 0 4px;
    font-size: 26px;
}
.g-font .body {
    padding: 15px 0 0 16px;
}
.font-top {
    display: flex;
    align-items: center;
    height: 47px;
}
.combo.size {
    width: 87px;
    margin-left: 5px;
    font-size: 25px;
}
.grow, .shrink {
    display: flex;
    margin-left: 12px;
    width: 49px;
    padding-bottom: 3px;
}
.shrink {
    font-size: 22px;
}
.grow .chev, .shrink .chev {
    color: #2b88c9;
    margin-left: -3px;
    width: 12px;
}
.grow .chev {
    transform: rotate(180deg);
}
.font-bottom {
    height: 48px;
    margin-top: 17px;
    padding-left: 14px;
    display: grid;
    grid-template-columns: 55px 57px 49px 27px 13px 52px 28px 13px 52px 35px 52px 28px 12px 53px 14px;
    align-items: center;
    font-size: 22px;
}
.font-bottom b, .font-bottom em, .font-bottom u {
    padding-bottom: 3px;
}
.font-bottom u {
    text-underline-offset: 7px;
    text-decoration-thickness: 2px;
}
.ic30 {
    width: 30px;
    height: 30px;
}
.ic33 {
    width: 33px;
    height: 33px;
}
.color {
    width: 33px;
    border-bottom: 8px solid #f00;
    padding: 0 0 1px 6px;
    font-weight: 500;
}
.phonetic {
    font-size: 17px;
    color: #666;
}
.phonetic i {
    display: block;
    padding-left: 17px;
    font-style: normal;
    color: #2b88c9;
}
.g-align .body {
    display: flex;
    padding-left: 26px;
    padding-top: 12px;
}
.align-left {
    width: 291px;
    height: 124px;
    border-right: 2px solid #d0d0d0;
    padding-top: 2px;
}
.arow {
    height: 48px;
    display: grid;
    grid-template-columns: 47px 67px 48px 12px 44px 14px;
    align-items: center;
}
.arow.second {
    margin-top: 16px;
    grid-template-columns: 47px 67px 48px 15px 57px 28px;
}
.arow svg {
    width: 28px;
    height: 28px;
}
.arow .chev {
    width: 14px;
    height: 10px;
}
.arow .orient {
    width: 36px;
    height: 36px;
}
.orient text {
    font-size: 16px;
    fill: #444;
}
.pressed {
    width: 53px;
    height: 47px;
    border: 2px solid #616161;
    border-radius: 8px;
    background: #ebebeb;
    display: flex;
    align-items: center;
    justify-content: center;
}
.align-right {
    padding: 2px 0 0 12px;
}
.wrap {
    width: 207px;
    height: 47px;
    border: 2px solid #616161;
    border-radius: 8px;
    background: #ebebeb;
    display: flex;
    align-items: center;
    padding-left: 6px;
}
.wrap svg {
    width: 34px;
    height: 34px;
    margin-right: 7px;
}
.wrap text {
    font-size: 15px;
}
.wrap span, .merge span {
    padding-bottom: 2px;
}
.merge {
    height: 48px;
    margin-top: 17px;
    padding-left: 7px;
    display: grid;
    grid-template-columns: 43px 259px 14px;
    align-items: center;
    letter-spacing: -.1px;
}
.merge svg {
    width: 30px;
    height: 30px;
}
.merge .chev, .combo .chev {
    width: 14px;
    height: 10px;
}
.g-num .body {
    padding: 15px 0 0 16px;
}
.g-num .label {
    padding-right: 32px;
}
.g-num .combo {
    width: 316px;
}
.num-row {
    height: 48px;
    margin-top: 16px;
    padding-left: 8px;
    display: grid;
    grid-template-columns: 52px 35px 66px 41px 13px 57px 32px;
    align-items: center;
}
.pct {
    font-size: 36px;
    font-weight: 300;
}
.comma {
    width: 16px;
    height: 28px;
}
.dec {
    width: 32px;
    height: 34px;
}
.dec text {
    font: 17.500px "Noto Sans CJK KR", sans-serif;
    fill: #333;
}
.g-style {
    border: none;
}
.g-style .body {
    display: flex;
    padding: 15px 0 0 24px;
}
.big svg {
    width: 60px;
    height: 54px;
    margin-left: 7px;
}
.big {
    width: 91px;
}
.big span {
    display: flex;
    align-items: center;
    height: 32px;
    font-size: 25px;
}
.big span:first-of-type {
    padding-top: 2px;
    margin-top: 2px;
}
.big .chev {
    width: 14px;
    height: 10px;
    margin-left: 8px;
}
.tbl span:first-of-type {
    padding-left: 24px;
}
.gallery {
    width: 400px;
    height: 123px;
    margin-left: -6px;
    border: 2px solid #cdcdcd;
    border-radius: 8px;
    padding: 4px 2px;
    font-size: 30px;
}
.normal {
    height: 56px;
    border: 6px solid #9fd5b7;
    line-height: 35px;
    padding-left: 9px;
    color: #000;
}
.good {
    height: 44px;
    margin: 6px 0 0 6px;
    background: #c6efce;
    color: #006100;
    line-height: 33px;
    padding-left: 9px;
}

.notice {
    height: 58px;
    margin-left: 16px;
    background: #fbf6b5;
    border-radius: 0 0 0 14px;
    display: flex;
    align-items: center;
    padding: 4px 0 2px 18px;
    box-shadow: 0 2px 6px #bbb;
    color: #333;
}
.notice svg {
    width: 44px;
    height: 44px;
}
.notice b {
    width: 168px;
    margin-left: 19px;
    padding-bottom: 3px;
}
.msg {
    width: 843px;
    padding-bottom: 3px;
    word-spacing: 1px;
    letter-spacing: -.5px;
}
.notice button {
    width: 222px;
    height: 43px;
    border: 2px solid #b3b09a;
    border-radius: 8px;
    background: #fff;
    color: #333;
    padding-bottom: 2px;
}

.formula-bar {
    height: 81px;
    padding: 17px 0 0 17px;
    display: flex;
    position: relative;
    align-items: flex-start;
}
.name-box {
    width: 201px;
    height: 50px;
    border: 1px solid #ccc;
    border-radius: 8px;
    background: #fff;
    display: flex;
    align-items: center;
    justify-content: space-between;
    padding: 0 7px 0 6px;
    font-size: 25px;
}
.name-box svg {
    width: 22px;
    height: 14px;
}
.dots {
    width: 4px;
    height: 22px;
    margin: 14px 19px 0 18px;
}
.fx {
    width: 145px;
    height: 50px;
    border: 1px solid #ccc;
    border-radius: 8px;
    background: #fff;
    display: flex;
    align-items: center;
    padding-left: 11px;
}
.fx svg {
    width: 24px;
    height: 24px;
}
.fx .check {
    width: 32px;
    height: 22px;
    margin: 0 18px 0 20px;
}
.fx span {
    font: italic 35px/35px "Liberation Serif", serif;
    padding: 0 0 4px 3px;
    color: #222;
}
.formula {
    flex: 1;
    height: 50px;
    background: #fff;
    border: solid #ccc;
    border-width: 1px 0;
}
.blank-formula {
    left: 407px;
    top: 8px;
    width: 653px;
    height: 68px;
}

.sheet-area {
    height: 1497px;
    display: flex;
}
.sheet {
    width: 3802px;
    overflow: hidden;
    position: relative;
    background: #fff;
    border-right: 1px solid #a6a6a6;
    border-bottom: 2px solid #a6a6a6;
}
.col-heads {
    height: 35px;
    display: flex;
    background: #f0f0f0;
    border-bottom: 1px solid #a0a0a0;
    font: 17.500px/26px "Open Sans", sans-serif;
    color: #444;
    text-align: center;
}
.corner {
    width: 43px;
    flex: none;
    padding: 6px 0 0 12px;
}
.corner i {
    display: block;
    width: 27px;
    height: 26px;
    background: #dcdcdc;
    clip-path: polygon(100% 0, 100% 100%, 0 100%);
}
.col-head {
    flex: none;
    border-right: 1px solid #d8d8d8;
}
.col-head.on {
    background: #dfdfdf;
    border-bottom: 3px solid #20693e;
    color: #1c7044;
}
.row {
    height: 32px;
    display: flex;
}
.row.tall {
    height: 138px;
}
.row-head {
    width: 43px;
    flex: none;
    border-right: 1px solid #a0a0a0;
    border-bottom: 1px solid #d4d4d4;
    background: #f0f0f0;
    display: flex;
    align-items: flex-end;
    justify-content: center;
    font: 17.500px/26px "Open Sans", sans-serif;
    color: #444;
}
.tall .row-head {
    background: #dfdfdf;
    border-right: 3px solid #20693e;
    color: #1c7044;
}
.cell {
    flex: none;
    border-right: 1px solid #dcdcdc;
    border-bottom: 1px solid #dcdcdc;
}
.blank-cells {
    left: 99px;
    top: 39px;
    width: 2048px;
    height: 1063px;
}
.vscroll {
    flex: 1;
    background: #f3f3f3;
    display: flex;
    flex-direction: column;
    justify-content: flex-end;
    padding: 0 0 8px 11px;
}
.vscroll .thumb {
    width: 16px;
    height: 1100px;
    border-radius: 8px;
    background: #6e6e6e;
    margin-bottom: 45px;
}
.vscroll svg {
    width: 18px;
    height: 14px;
    margin-left: -1px;
}
.sheet-tabs {
    height: 44px;
    background: #f5f5f5;
    border-bottom: 2px solid #fff;
    display: flex;
    align-items: center;
    position: relative;
}
.nav1 {
    width: 52px;
    height: 16px;
    margin-left: 34px;
}
.splitter {
    width: 43px;
    height: 42px;
    margin-left: 2195px;
    background: #eee;
    display: flex;
    align-items: center;
    justify-content: center;
}
.splitter svg {
    width: 4px;
    height: 22px;
}
.hscroll {
    display: flex;
    align-items: center;
    padding: 0 0 2px 10px;
}
.hscroll svg {
    width: 14px;
    height: 18px;
}
.hscroll .thumb {
    width: 1369px;
    height: 16px;
    border-radius: 8px;
    background: #6e6e6e;
    margin: 0 53px 0 10px;
}
.blank-tabs {
    left: 131px;
    top: -26px;
    width: 1189px;
    height: 74px;
}
.status {
    height: 42px;
    background: #f4f4f4;
    display: flex;
    align-items: center;
}
.status-text {
    width: 3235px;
    margin-left: 15px;
    letter-spacing: -.4px;
}
.view {
    width: 80px;
    height: 42px;
    display: flex;
    align-items: center;
    justify-content: center;
}
.view.on {
    background: #dfdfdf;
}
.view svg {
    width: 28px;
    height: 28px;
}
.zoom-bar {
    width: 252px;
    height: 26px;
    margin: 0 26px 0 12px;
}

/* taskbar */
.taskbar {
    height: 80px;
    display: flex;
    align-items: center;
    background: linear-gradient(90deg, #e8dfc0 0, #e6dfc0 22%, #e3d9c4 28%, #e2d8be 55%, #e7dfb8 62%, #e2dac0 75%, #e6dfbc 84%, #dbd8cb 93%, #dad8cc 100%);
    color: #111;
}
.start {
    width: 32px;
    height: 32px;
    margin: 0 33px 0 32px;
}
.tb-search {
    width: 687px;
    height: 79px;
    border: 2px solid #c8c8c8;
    background: #fff;
    display: flex;
    align-items: center;
    padding-left: 21px;
    font-size: 31px;
    color: #333;
}
.tb-mag {
    width: 32px;
    height: 32px;
    color: #000;
}
.tb-search span {
    width: 447px;
    margin-left: 25px;
    word-spacing: 6px;
    letter-spacing: .8px;
}
.desert {
    width: 158px;
    height: 75px;
    overflow: hidden;
}
.cortana {
    width: 32px;
    height: 32px;
    margin-left: 32px;
}
.taskview {
    width: 34px;
    height: 32px;
    margin: 0 45px 0 63px;
}
.task {
    height: 80px;
    width: 304px;
    border-bottom: 4px solid #0a78d4;
    padding-top: 4px;
    display: flex;
    align-items: center;
    color: #000;
}
.task span {
    padding-bottom: 2px;
}
.task svg {
    width: 46px;
    height: 46px;
    margin-left: 13px;
    margin-right: 6px;
}
.docs svg {
    width: 36px;
    height: 44px;
    margin-left: 20px;
    margin-right: 8px;
}
.store {
    width: 46px;
    height: 48px;
    margin: 0 35px 0 35px;
}
.task.tm {
    width: 320px;
    margin: 0 10px;
    background: #f4f2e6;
}
.tm svg {
    margin-left: 21px;
}
.chrome span, .xl span {
    letter-spacing: -.6px;
}
.xl svg {
    width: 48px;
    height: 44px;
    margin-left: 11px;
}
.weather {
    width: 46px;
    height: 44px;
    margin: 0 17px 0 678px;
}
.temp {
    width: 78px;
    font-size: 27px;
}
.cond-text {
    width: 182px;
    font-size: 28px;
    word-spacing: 5px;
    letter-spacing: .6px;
}
.up {
    width: 26px;
    height: 14px;
}
.tray {
    width: 34px;
    height: 32px;
}
.sync {
    margin-left: 18px;
}
.net {
    margin-left: 14px;
}
.vol {
    margin-left: 15px;
}
.ime {
    width: 50px;
    margin-left: 14px;
    font-size: 42px;
}
.clock {
    width: 122px;
    display: flex;
    flex-direction: column;
    align-items: center;
    gap: 13px;
    padding-bottom: 2px;
    font-size: 24px;
}
.note {
    width: 34px;
    height: 34px;
    margin-left: 38px;
}
.peek {
    width: 2px;
    height: 80px;
    margin-left: 38px;
    background: #b8b5a8;
}

/* task manager window */
.taskmgr {
    position: absolute;
    left: 2480px;
    top: 14px;
    width: 1360px;
    height: 1199px;
    background: #1a83d8;
    border: 1px solid #16364f;
    padding: 0 12px;
    color: #000;
}
.tm-title {
    height: 56px;
    display: flex;
    align-items: center;
    color: #fff;
    margin-right: -1px;
}
.tm-icon {
    width: 31px;
    height: 31px;
    margin-left: 13px;
}
.tm-title span {
    flex: 1;
    margin-left: 6px;
    padding-bottom: 3px;
    letter-spacing: -.3px;
    word-spacing: 2px;
}
.btn {
    width: 93px;
    height: 56px;
    border: solid #1b3d5c;
    border-width: 0 0 1px 1px;
    display: flex;
    align-items: center;
    justify-content: center;
}
.btn svg {
    width: 20px;
    height: 20px;
}
.btn.close {
    background: #c15b50;
}
.tm-client {
    height: 1129px;
    background: #fff;
}
.tm-menu {
    height: 38px;
    background: #f0f0f0;
    display: grid;
    grid-template-columns: 88px 95px 90px;
    padding: 0 0 1px 8px;
    align-items: center;
    font-size: 25.500px;
    letter-spacing: -.3px;
}
.tm-tabs {
    height: 52px;
    padding-top: 4px;
    display: grid;
    grid-template-columns: 128px 68px 104px 168px 96px 128px 96px 1fr;
    align-items: end;
    background: linear-gradient(#8c8c94, #8c8c94) 0 bottom / 100% 2px no-repeat;
}
.tm-tabs span {
    height: 44px;
    border: solid #8c8c94;
    border-width: 1px 1px 2px 0;
    background: #ebebeb;
    line-height: 39px;
    text-align: center;
    word-spacing: 1px;
}
.tm-tabs .on {
    height: 48px;
    background: #fff;
    border-width: 1px 1px 0 1px;
}
.tm-head {
    height: 118px;
    padding: 24px 0 0 2px;
    border-bottom: 2px solid #a0a0a0;
    display: grid;
    grid-template-columns: 468px 240px 146px 146px 146px 146px 1fr;
    color: #4c607a;
}
.tm-head > div {
    border-right: 1px solid #cfcfcf;
}
.tm-head .h-end {
    border: none;
}
.h-name, .h-state {
    padding: 54px 0 0 13px;
}
.h-num {
    padding: 9px 13px 0 0;
    display: flex;
    flex-direction: column;
    align-items: flex-end;
    gap: 14px;
    position: relative;
}
.h-num b {
    font-weight: normal;
    font-size: 32.500px;
    line-height: 31px;
    color: #000;
}
.h-num span.en {
    margin-top: 3px;
}
.tm-head .mem {
    background: #ffcab6;
    border: 1px solid #cf6a42;
    color: #000;
    padding-top: 8px;
}
.mem svg {
    position: absolute;
    left: 17px;
    top: 12px;
    width: 18px;
    height: 12px;
}
.tm-main {
    height: 789px;
    margin-left: 2px;
    display: flex;
}
.procs {
    width: 1299px;
    overflow: hidden;
}
.proc {
    height: 56px;
    display: grid;
    grid-template-columns: 56px 45px 607px 146px 146px 146px 146px 7px;
    font-size: 26px;
}
.proc > * {
    display: flex;
    align-items: center;
}
.proc .arrow-cell {
    padding: 0 0 3px 19px;
}
.arrow-cell svg {
    width: 12px;
    height: 20px;
}
.pic svg {
    width: 32px;
    height: 32px;
}
.pname {
    white-space: pre;
    letter-spacing: -.4px;
    word-spacing: 1px;
    padding-top: 1px;
}
.num {
    font-family: "Open Sans", sans-serif;
    font-size: 23.200px;
    letter-spacing: -.45px;
    justify-content: flex-end;
    padding: 2px 12px 0 0;
    border-left: 1px solid #e5dca9;
    background: #fff4c4;
}
.num.disk {
    border-left: none;
}
.num.mem {
    border: solid #dc7446;
    border-width: 0 1px;
}
.warm {
    background: #f8eba6;
}
.hot {
    background: #ffc540;
}
.max {
    background: #fcb817;
}
.hover {
    background: #f4f9ff;
    box-shadow: inset 0 2px #c4d9e4, inset 0 -1px #c4d9e4;
}
.hover .num {
    background: #f9f6e6;
}
.hover .warm {
    background: #f5f3da;
}
.hover .mem {
    background: #f8f0ce;
}
.selected {
    background: #dcebfe;
    box-shadow: inset 0 1px #88a5bd, inset 0 -1px #88a5bd;
}
.selected .num {
    background: #e5edef;
}
.selected .warm {
    background: #e3ebe6;
}
.hover .num, .selected .num {
    border-top: 1px solid #c0cbbf;
    border-bottom: 1px solid #c0cbbf;
}
.tm-vscroll {
    width: 33px;
    border: 1px solid #c4c4c4;
    display: flex;
    flex-direction: column;
    background: #fff;
}
.arrow {
    display: flex;
    align-items: center;
    justify-content: center;
    flex: none;
}
.arrow .chev {
    color: #666;
}
.tm-vscroll .arrow {
    height: 33px;
    width: 31px;
}
.up .chev {
    transform: rotate(180deg);
}
.left .chev {
    transform: rotate(90deg);
}
.right .chev {
    transform: rotate(-90deg);
}
.down {
    margin-top: auto;
    border-top: 1px solid #c4c4c4;
}
.tm-vscroll .thumb {
    height: 58px;
    background: #dcdcdc;
    border: solid #a6a6a6;
    border-width: 1px 0;
    display: flex;
    flex-direction: column;
    align-items: center;
    justify-content: center;
    gap: 1px;
}
.tm-vscroll .thumb i {
    width: 12px;
    height: 4px;
    background: #555;
}
.tm-hscroll {
    height: 36px;
    margin-left: 2px;
    border-top: 1px solid #b5b5b5;
    border-bottom: 2px solid #a0a0a0;
    display: flex;
}
.tm-hscroll .arrow {
    width: 34px;
    border: solid #c4c4c4;
    border-width: 0 1px;
}
.tm-hscroll .right {
    margin-left: 517px;
}
.tm-hscroll .thumb {
    width: 713px;
    background: #dcdcdc;
    border-right: 1px solid #a6a6a6;
    display: flex;
    align-items: center;
    justify-content: center;
    gap: 1px;
}
.tm-hscroll .thumb i {
    width: 4px;
    height: 12px;
    background: #666;
}
.tm-foot {
    height: 96px;
    display: flex;
    align-items: center;
    padding: 0 0 2px 16px;
}
.tm-foot > svg {
    width: 38px;
    height: 38px;
    margin-right: 15px;
}
.tm-foot button {
    width: 169px;
    height: 44px;
    margin-left: auto;
    margin-right: 17px;
    border: 1px solid #707070;
    background: #dedede;
    font-size: 25px;
}
```
FILE: script.js
```js
// right edge of each column, A to AH
const edges = [78, 114, 150, 266, 752, 872, 992, 1112, 1239, 1367, 1493, 1620, 1721, 1822, 1923, 2024, 2125];
for (let x = 2226; x < 3800; x += 101) edges.push(x);
edges.push(3842);

const widths = edges.map((x, i) => x - (i ? edges[i - 1] : 42));

function colName(i) {
    if (i === edges.length - 1) return ''; // last one is cut by the scrollbar
    return i < 26 ? String.fromCharCode(65 + i) : 'A' + String.fromCharCode(39 + i);
}

document.getElementById('colHeads').innerHTML = '<div class="corner"><i></i></div>' + widths.map((w, i) =>
    `<div class="col-head${colName(i) === 'J' ? ' on' : ''}" style="width:${w}px">${colName(i)}</div>`).join('');

const cells = widths.map(w => `<div class="cell" style="width:${w}px"></div>`).join('');
let rows = '';
for (let n = 1; n <= 43; n++) {
    rows += `<div class="row${n === 29 ? ' tall' : ''}"><div class="row-head">${n < 43 ? n : ''}</div>${cells}</div>`;
}
document.getElementById('rows').innerHTML = rows;

// expandable, icon, name, cpu, memory, disk, network, warm columns
const procs = [
    [1, 'excel', 'Microsoft Excel', '46.3%', '1,408.7MB', '4.4MB/s', '0Mbps', 'd'],
    [1, 'chrome', 'Google Chrome(6)', '0.1%', '243.0MB', '0.2MB/s', '0Mbps', 'cd', 'hover'],
    [0, 'chrome', 'Google Chrome', '0.3%', '186.3MB', '0.8MB/s', '0Mbps', 'cd'],
    [1, 'exe', 'Antimalware Service Executable', '0.1%', '41.1MB', '0.2MB/s', '0Mbps', 'cd'],
    [1, 'folder', 'Windows 탐색기', '0%', '20.6MB', '0MB/s', '0Mbps', ''],
    [1, 'tm', '작업 관리자', '0.4%', '16.7MB', '0MB/s', '0Mbps', 'c', 'selected'],
    [0, 'exe', '데스크톱 창 관리자', '0%', '16.5MB', '0MB/s', '0Mbps', 'x'],
    [1, 'gear', '서비스 호스트: 원격 프로시저 ...', '0.1%', '6.9MB', '0MB/s', '0Mbps', 'c'],
    [0, 'chrome', 'Google Chrome', '0%', '5.2MB', '0.1MB/s', '0Mbps', 'd'],
    [0, 'chrome', 'Google Chrome', '0.1%', '4.9MB', '0.1MB/s', '0Mbps', 'cdn'],
    [1, 'finder', 'Microsoft Windows Search 인...', '0%', '4.6MB', '0.1MB/s', '0Mbps', 'd'],
    [1, 'gear', '서비스 호스트: State Repository...', '0%', '4.4MB', '0MB/s', '0Mbps', ''],
    [0, 'edge', 'Microsoft Edge', '0%', '3.9MB', '0.1MB/s', '0Mbps', 'd'],
    [1, 'gear', '서비스 호스트: Windows Push ...', '0%', '3.9MB', '0MB/s', '0Mbps', ''],
    [0, '', '', '', '', '', '', '']
];
const arrow = '<svg viewBox="0 0 12 20"><path d="M2 2l7 8-7 8" fill="none" stroke="#999" stroke-width="4"/></svg>';

document.getElementById('procs').innerHTML = procs.map(([open, icon, name, cpu, mem, disk, net, heat, state], i) => {
    const warm = k => heat.includes(k) ? ' warm' : '';
    const label = name.replace(/[A-Za-z(:.][\w ().:]*/g, '<span class="en">$&</span>');
    return `<div class="proc ${state || ''}">
        <div class="arrow-cell">${open ? arrow : ''}</div>
        <div class="pic">${icon ? `<svg><use href="#${icon}"/></svg>` : ''}</div>
        <div class="pname"><span>${label}</span></div>
        <div class="num${i === 0 ? ' hot' : warm('c')}">${cpu}</div>
        <div class="num mem ${i === 0 ? 'max' : 'warm'}">${mem}</div>
        <div class="num disk${warm('d')}">${disk}</div>
        <div class="num${warm('n')}">${net}</div>
        <div class="num${warm('x')}"></div>
    </div>`;
}).join('');
```
